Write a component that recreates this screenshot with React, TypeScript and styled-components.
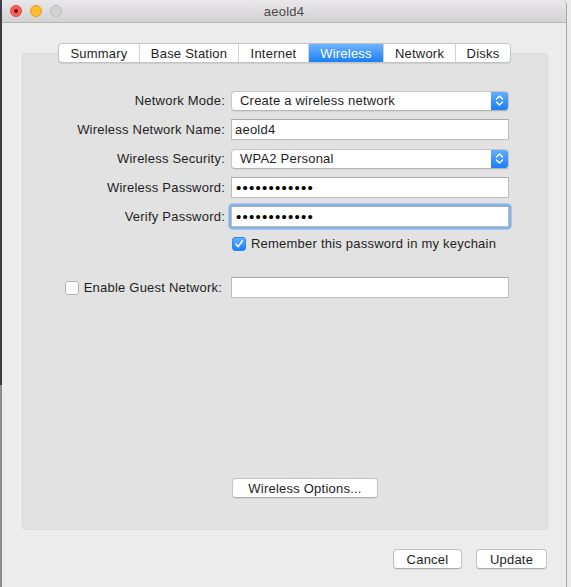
import React from "react";
import styled, { createGlobalStyle } from "styled-components";

const GlobalStyle = createGlobalStyle`
  html, body {
    margin: 0;
    padding: 0;
  }
  body {
    width: 571px;
    height: 587px;
    overflow: hidden;
    font-family: "Liberation Sans", Arial, sans-serif;
    font-size: 13px;
    letter-spacing: 0.22px;
    color: #1e1e1e;
    background:
      linear-gradient(#3b3e46, #3b3e46) 0 0 / 2px 385px no-repeat,
      linear-gradient(#8c8c8c, #8c8c8c) 0 385px / 2px 100% no-repeat,
      #ebebeb;
  }
`;

const Window = styled.div`
  margin-left: 2px;
  width: 564px;
  height: 587px;
  background: #ececec;
  border-right: 1px solid #a6a6a6;
  border-top-right-radius: 5px;
  border-top-left-radius: 5px;
  overflow: hidden;
  display: flex;
  flex-direction: column;
`;

const TitleBar = styled.div`
  position: relative;
  height: 22px;
  flex-shrink: 0;
  background: linear-gradient(#e9e7e9, #d4d3d4);
  border-bottom: 1px solid #b5b5b5;
  display: flex;
  align-items: center;
  justify-content: center;
`;

const Title = styled.div`
  font-size: 13px;
  color: #4a4a4a;
  padding-top: 1px;
`;

const Lights = styled.div`
  position: absolute;
  left: 8px;
  top: 5px;
  display: flex;
  gap: 8px;
`;

const Light = styled.div<{ $fill: string; $edge: string; $dot?: boolean }>`
  width: 12px;
  height: 12px;
  border-radius: 50%;
  box-sizing: border-box;
  background: ${({ $fill }) => $fill};
  border: 1px solid ${({ $edge }) => $edge};
  display: flex;
  align-items: center;
  justify-content: center;
  &::after {
    content: "";
    display: ${({ $dot }) => ($dot ? "block" : "none")};
    width: 4px;
    height: 4px;
    border-radius: 50%;
    background: #5a0b08;
  }
`;

const Body = styled.div`
  flex: 1;
  padding: 20px 18px 0 20px;
  display: flex;
  flex-direction: column;
`;

const TabStrip = styled.div`
  display: flex;
  justify-content: center;
  position: relative;
  z-index: 1;
  margin-right: 1px;
`;

const Segments = styled.div`
  display: flex;
  height: 20px;
  background: #fff;
  border: 1px solid #c3c3c3;
  border-radius: 4px;
  box-shadow: 0 1px 0 rgba(0, 0, 0, 0.08);
  overflow: hidden;
  box-sizing: border-box;
`;

const Segment = styled.div<{ $w: number; $active?: boolean }>`
  width: ${({ $w }) => $w}px;
  box-sizing: border-box;
  display: flex;
  align-items: center;
  justify-content: center;
  font-size: 13px;
  color: ${({ $active }) => ($active ? "#fff" : "#1e1e1e")};
  background: ${({ $active }) =>
    $active ? "linear-gradient(#6db3fb, #1c80fa)" : "transparent"};
  border-left: 1px solid #d3d3d3;
  &:first-child {
    border-left: none;
  }
`;

const Panel = styled.div`
  margin-top: -10px;
  height: 477px;
  box-sizing: border-box;
  background: #e2e2e2;
  border: 1px solid #d9d9d9;
  border-radius: 4px;
  padding: 32px 38px 31px 42px;
  display: flex;
  flex-direction: column;
`;

const Row = styled.div<{ $h?: number; $mt?: number }>`
  display: grid;
  grid-template-columns: 160px 278px;
  column-gap: 6px;
  align-items: center;
  height: ${({ $h }) => $h ?? 29}px;
  margin-top: ${({ $mt }) => $mt ?? 0}px;
`;

const Label = styled.div`
  text-align: right;
  color: #1e1e1e;
  white-space: nowrap;
`;

const GuestLabel = styled.div`
  display: flex;
  align-items: center;
  justify-content: space-between;
  padding-right: 3px;
  white-space: nowrap;
`;

const Popup = styled.div`
  height: 20px;
  box-sizing: border-box;
  background: #fff;
  border: 1px solid #c6c6c6;
  border-bottom-color: #b4b4b4;
  border-radius: 4px;
  display: flex;
  align-items: center;
  overflow: hidden;
  box-shadow: 0 1px 0 rgba(0, 0, 0, 0.05);
`;

const PopupText = styled.div`
  flex: 1;
  padding-left: 8px;
`;

const PopupCap = styled.div`
  width: 17px;
  height: 100%;
  background: linear-gradient(#64aefb, #1a7ef9);
  display: flex;
  align-items: center;
  justify-content: center;
`;

const Field = styled.div<{ $focused?: boolean }>`
  height: 21px;
  box-sizing: border-box;
  background: #fff;
  border: 1px solid #bcbcbc;
  border-top-color: #aaaaaa;
  padding-left: 3px;
  display: flex;
  align-items: center;
  box-shadow: ${({ $focused }) =>
    $focused ? "0 0 0 2px #83b1e8, 0 0 0 3px #a8c8ef" : "none"};
  border-radius: ${({ $focused }) => ($focused ? "2px" : "0")};
`;

const Dots = styled.span`
  font-size: 15px;
  letter-spacing: 1.25px;
  line-height: 1;
  color: #000;
  padding-left: 1px;
`;

const Check = styled.div<{ $checked?: boolean }>`
  width: 14px;
  height: 14px;
  box-sizing: border-box;
  border-radius: 3px;
  flex-shrink: 0;
  background: ${({ $checked }) =>
    $checked ? "linear-gradient(#68b0fb, #1b7ffa)" : "#fff"};
  border: 1px solid ${({ $checked }) => ($checked ? "#2a86f5" : "#b3b3b3")};
  display: flex;
  align-items: center;
  justify-content: center;
`;

const CheckRow = styled.div`
  display: flex;
  align-items: center;
  gap: 5px;
  padding-left: 1px;
  white-space: nowrap;
`;

const Spacer = styled.div`
  flex: 1;
`;

const PushButton = styled.div<{ $w: number }>`
  width: ${({ $w }) => $w}px;
  height: 20px;
  box-sizing: border-box;
  background: #fff;
  border: 1px solid #c3c3c3;
  border-bottom-color: #adadad;
  border-radius: 4px;
  box-shadow: 0 1px 0 rgba(0, 0, 0, 0.06);
  display: flex;
  align-items: center;
  justify-content: center;
  color: #1e1e1e;
`;

const ButtonCell = styled.div`
  grid-column: 2;
  padding-left: 1px;
`;

const Footer = styled.div`
  display: flex;
  justify-content: flex-end;
  gap: 14px;
  padding-top: 19px;
  padding-right: 1px;
`;

function Chevrons() {
  return (
    <svg width="9" height="13" viewBox="0 0 9 13">
      <path
        d="M1.5 5 L4.5 2 L7.5 5 M1.5 8 L4.5 11 L7.5 8"
        fill="none"
        stroke="#fff"
        strokeWidth="1.4"
        strokeLinecap="round"
        strokeLinejoin="round"
      />
    </svg>
  );
}

function Tick() {
  return (
    <svg width="10" height="10" viewBox="0 0 10 10">
      <path
        d="M2 5.2 L4.2 7.6 L8.2 2"
        fill="none"
        stroke="#fff"
        strokeWidth="1.6"
        strokeLinecap="round"
        strokeLinejoin="round"
      />
    </svg>
  );
}

const tabs = [
  { name: "Summary", w: 80 },
  { name: "Base Station", w: 99 },
  { name: "Internet", w: 70 },
  { name: "Wireless", w: 75, active: true },
  { name: "Network", w: 72 },
  { name: "Disks", w: 55 },
];

export default function App() {
  return (
    <>
      <GlobalStyle />
      <Window>
        <TitleBar>
          <Lights>
            <Light $fill="#fc5f57" $edge="#de4640" $dot />
            <Light $fill="#fdbc2e" $edge="#dea123" />
            <Light $fill="#d2d2d2" $edge="#bebebe" />
          </Lights>
          <Title>aeold4</Title>
        </TitleBar>

        <Body>
          <TabStrip>
            <Segments>
              {tabs.map((t) => (
                <Segment key={t.name} $w={t.w} $active={t.active}>
                  {t.name}
                </Segment>
              ))}
            </Segments>
          </TabStrip>

          <Panel>
            <Row>
              <Label>Network Mode:</Label>
              <Popup>
                <PopupText>Create a wireless network</PopupText>
                <PopupCap>
                  <Chevrons />
                </PopupCap>
              </Popup>
            </Row>
            <Row>
              <Label>Wireless Network Name:</Label>
              <Field>aeold4</Field>
            </Row>
            <Row>
              <Label>Wireless Security:</Label>
              <Popup>
                <PopupText>WPA2 Personal</PopupText>
                <PopupCap>
                  <Chevrons />
                </PopupCap>
              </Popup>
            </Row>
            <Row>
              <Label>Wireless Password:</Label>
              <Field>
                <Dots>••••••••••••</Dots>
              </Field>
            </Row>
            <Row>
              <Label>Verify Password:</Label>
              <Field $focused>
                <Dots>••••••••••••</Dots>
              </Field>
            </Row>
            <Row $h={25}>
              <span />
              <CheckRow>
                <Check $checked>
                  <Tick />
                </Check>
                Remember this password in my keychain
              </CheckRow>
            </Row>

            <Row $mt={17}>
              <GuestLabel>
                <Check />
                Enable Guest Network:
              </GuestLabel>
              <Field />
            </Row>

            <Spacer />

            <Row $h={20}>
              <ButtonCell>
                <PushButton $w={146}>Wireless Options...</PushButton>
              </ButtonCell>
            </Row>
          </Panel>

          <Footer>
            <PushButton $w={69}>Cancel</PushButton>
            <PushButton $w={71}>Update</PushButton>
          </Footer>
        </Body>
      </Window>
    </>
  );
}
